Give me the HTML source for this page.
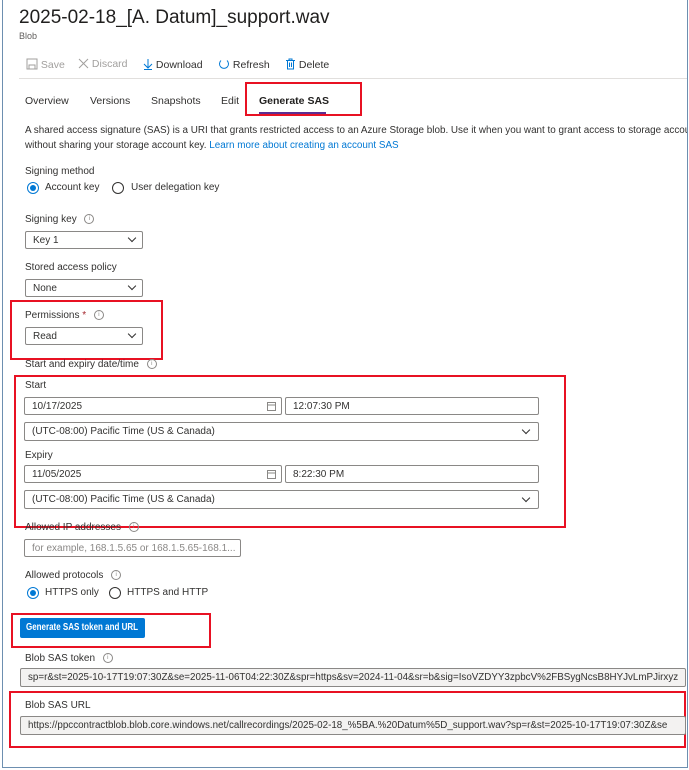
<!DOCTYPE html>
<html><head><meta charset="utf-8"><style>
body{margin:0;width:689px;height:770px;background:#fff;position:relative;overflow:hidden;font-family:"Liberation Sans",sans-serif;color:#323130;font-size:10px}
.a{position:absolute;white-space:nowrap}
.in{position:absolute;border:1px solid #8a8886;background:#fff;height:18px;box-sizing:border-box;font-size:10px;line-height:17px;padding-left:7px;border-radius:2px;white-space:nowrap}
.g{background:#f3f2f1;color:#323130;overflow:hidden}
.red{position:absolute;border:2px solid #e81123;box-sizing:border-box}
.chev{position:absolute;right:7px;top:3px;width:5px;height:5px;border-right:1px solid #323130;border-bottom:1px solid #323130;transform:rotate(45deg)}
.rad{position:absolute;width:12px;height:12px;border:1px solid #323130;border-radius:50%;box-sizing:border-box}
.rad.on{border-color:#0078d4}
.rad.on::after{content:"";position:absolute;left:2px;top:2px;width:6px;height:6px;border-radius:50%;background:#0078d4}
.i{display:inline-block;width:8px;height:8px;border:1px solid #8a8886;border-radius:50%;font-size:6px;line-height:8px;text-align:center;color:#8a8886;vertical-align:middle;margin-left:5px}
</style></head><body>
<div class="a" style="left:2px;top:0;width:1px;height:768px;background:#6d8fb0"></div>
<div class="a" style="left:2px;top:767px;width:686px;height:1px;background:#6d8fb0"></div>
<div class="a" style="left:687px;top:0;width:1px;height:768px;background:#6d8fb0"></div>

<div class="a" style="left:19px;top:7px;font-size:19px;color:#201f1e">2025-02-18_[A. Datum]_support.wav</div>
<div class="a" style="left:19px;top:31px;font-size:9px;color:#605e5c">Blob</div>

<div class="a" style="left:26px;top:58px;font-size:10.5px;color:#a19f9d">
<svg width="12" height="12" style="vertical-align:-2px"><rect x="1" y="1" width="10" height="10" fill="none" stroke="#a19f9d"/><rect x="3" y="7" width="6" height="4" fill="none" stroke="#a19f9d"/></svg> Save</div>
<div class="a" style="left:78px;top:58px;font-size:10.5px;color:#a19f9d"><svg width="11" height="11" style="vertical-align:-2px"><path d="M1 1L10 10M10 1L1 10" stroke="#a19f9d"/></svg> Discard</div>
<div class="a" style="left:143px;top:58px;font-size:10.5px;color:#323130"><svg width="10" height="12" style="vertical-align:-2px"><path d="M5 1V10M1 6L5 10L9 6M1 11.5H9" stroke="#0078d4" fill="none"/></svg> Download</div>
<div class="a" style="left:218px;top:58px;font-size:10.5px;color:#323130"><svg width="12" height="12" style="vertical-align:-2px"><path d="M9 2.5A4.5 4.5 0 1 1 3 2.5" stroke="#0078d4" fill="none"/></svg> Refresh</div>
<div class="a" style="left:285px;top:58px;font-size:10.5px;color:#323130"><svg width="11" height="12" style="vertical-align:-2px"><path d="M1 2.5H10M4 2.5V1H7V2.5M2.5 2.5V11H8.5V2.5M4.5 4.5V9M6.5 4.5V9" stroke="#0078d4" fill="none"/></svg> Delete</div>
<div class="a" style="left:19px;top:78px;width:668px;height:1px;background:#e1dfdd"></div>

<div class="a" style="left:25px;top:95px;font-size:10.5px">Overview</div>
<div class="a" style="left:90px;top:95px;font-size:10.5px">Versions</div>
<div class="a" style="left:151px;top:95px;font-size:10.5px">Snapshots</div>
<div class="a" style="left:221px;top:95px;font-size:10.5px">Edit</div>
<div class="a" style="left:259px;top:95px;font-size:10.5px;font-weight:bold;color:#201f1e">Generate SAS</div>
<div class="a" style="left:259px;top:112px;width:67px;height:2px;background:#5c2e91"></div>
<div class="red" style="left:245px;top:82px;width:117px;height:34px"></div>

<div class="a" style="left:25px;top:125px;width:662px;overflow:hidden;font-size:9.9px">A shared access signature (SAS) is a URI that grants restricted access to an Azure Storage blob. Use it when you want to grant access to storage account resources</div>
<div class="a" style="left:25px;top:140px;font-size:9.9px">without sharing your storage account key. <span style="color:#0078d4">Learn more about creating an account SAS</span></div>

<div class="a" style="left:25px;top:166px">Signing method</div>
<div class="rad on" style="left:27px;top:182px"></div><div class="a" style="left:45px;top:182px">Account key</div>
<div class="rad" style="left:112px;top:182px"></div><div class="a" style="left:131px;top:182px">User delegation key</div>

<div class="a" style="left:25px;top:214px">Signing key <span class="i">i</span></div>
<div class="in" style="left:25px;top:231px;width:118px">Key 1<div class="chev"></div></div>
<div class="a" style="left:25px;top:262px">Stored access policy</div>
<div class="in" style="left:25px;top:279px;width:118px">None<div class="chev"></div></div>

<div class="red" style="left:10px;top:300px;width:153px;height:60px"></div>
<div class="a" style="left:25px;top:310px">Permissions <span style="color:#a4262c">*</span> <span class="i">i</span></div>
<div class="in" style="left:25px;top:327px;width:118px">Read<div class="chev"></div></div>
<div class="a" style="left:25px;top:359px">Start and expiry date/time <span class="i">i</span></div>

<div class="red" style="left:14px;top:375px;width:552px;height:153px"></div>
<div class="a" style="left:25px;top:380px">Start</div>
<div class="in" style="left:24px;top:397px;width:258px">10/17/2025<svg class="a" style="right:5px;top:4px" width="9" height="9"><rect x="0.5" y="0.5" width="8" height="8" fill="none" stroke="#8a8886"/><path d="M0.5 3H8.5" stroke="#8a8886"/></svg></div>
<div class="in" style="left:285px;top:397px;width:254px">12:07:30 PM</div>
<div class="in" style="left:24px;top:422px;width:515px;height:19px;line-height:18px">(UTC-08:00) Pacific Time (US &amp; Canada)<div class="chev" style="right:9px;top:4px"></div></div>
<div class="a" style="left:25px;top:450px">Expiry</div>
<div class="in" style="left:24px;top:465px;width:258px">11/05/2025<svg class="a" style="right:5px;top:4px" width="9" height="9"><rect x="0.5" y="0.5" width="8" height="8" fill="none" stroke="#8a8886"/><path d="M0.5 3H8.5" stroke="#8a8886"/></svg></div>
<div class="in" style="left:285px;top:465px;width:254px">8:22:30 PM</div>
<div class="in" style="left:24px;top:490px;width:515px;height:19px;line-height:18px">(UTC-08:00) Pacific Time (US &amp; Canada)<div class="chev" style="right:9px;top:4px"></div></div>

<div class="a" style="left:25px;top:522px">Allowed IP addresses <span class="i">i</span></div>
<div class="in" style="left:24px;top:539px;width:217px;color:#8a8886">for example, 168.1.5.65 or 168.1.5.65-168.1...</div>

<div class="a" style="left:25px;top:570px">Allowed protocols <span class="i">i</span></div>
<div class="rad on" style="left:27px;top:587px"></div><div class="a" style="left:45px;top:587px">HTTPS only</div>
<div class="rad" style="left:109px;top:587px"></div><div class="a" style="left:127px;top:587px">HTTPS and HTTP</div>

<div class="red" style="left:11px;top:613px;width:200px;height:35px"></div>
<div class="a" style="left:20px;top:618px;width:125px;height:20px;background:#0078d4;border-radius:2px"><span class="a" style="left:62px;top:4px;color:#fff;font-weight:bold;font-size:10px;line-height:12px;transform:translateX(-50%) scaleX(0.8);transform-origin:center">Generate SAS token and URL</span></div>

<div class="a" style="left:25px;top:653px">Blob SAS token <span class="i">i</span></div>
<div class="in g" style="left:20px;top:668px;width:666px;height:19px;line-height:17px;font-size:9.8px">sp=r&amp;st=2025-10-17T19:07:30Z&amp;se=2025-11-06T04:22:30Z&amp;spr=https&amp;sv=2024-11-04&amp;sr=b&amp;sig=IsoVZDYY3zpbcV%2FBSygNcsB8HYJvLmPJirxyz</div>

<div class="red" style="left:9px;top:691px;width:677px;height:57px"></div>
<div class="a" style="left:25px;top:700px">Blob SAS URL</div>
<div class="in g" style="left:20px;top:716px;width:666px;height:19px;line-height:17px;font-size:9.8px">https://ppccontractblob.blob.core.windows.net/callrecordings/2025-02-18_%5BA.%20Datum%5D_support.wav?sp=r&amp;st=2025-10-17T19:07:30Z&amp;se</div>
</body></html>
